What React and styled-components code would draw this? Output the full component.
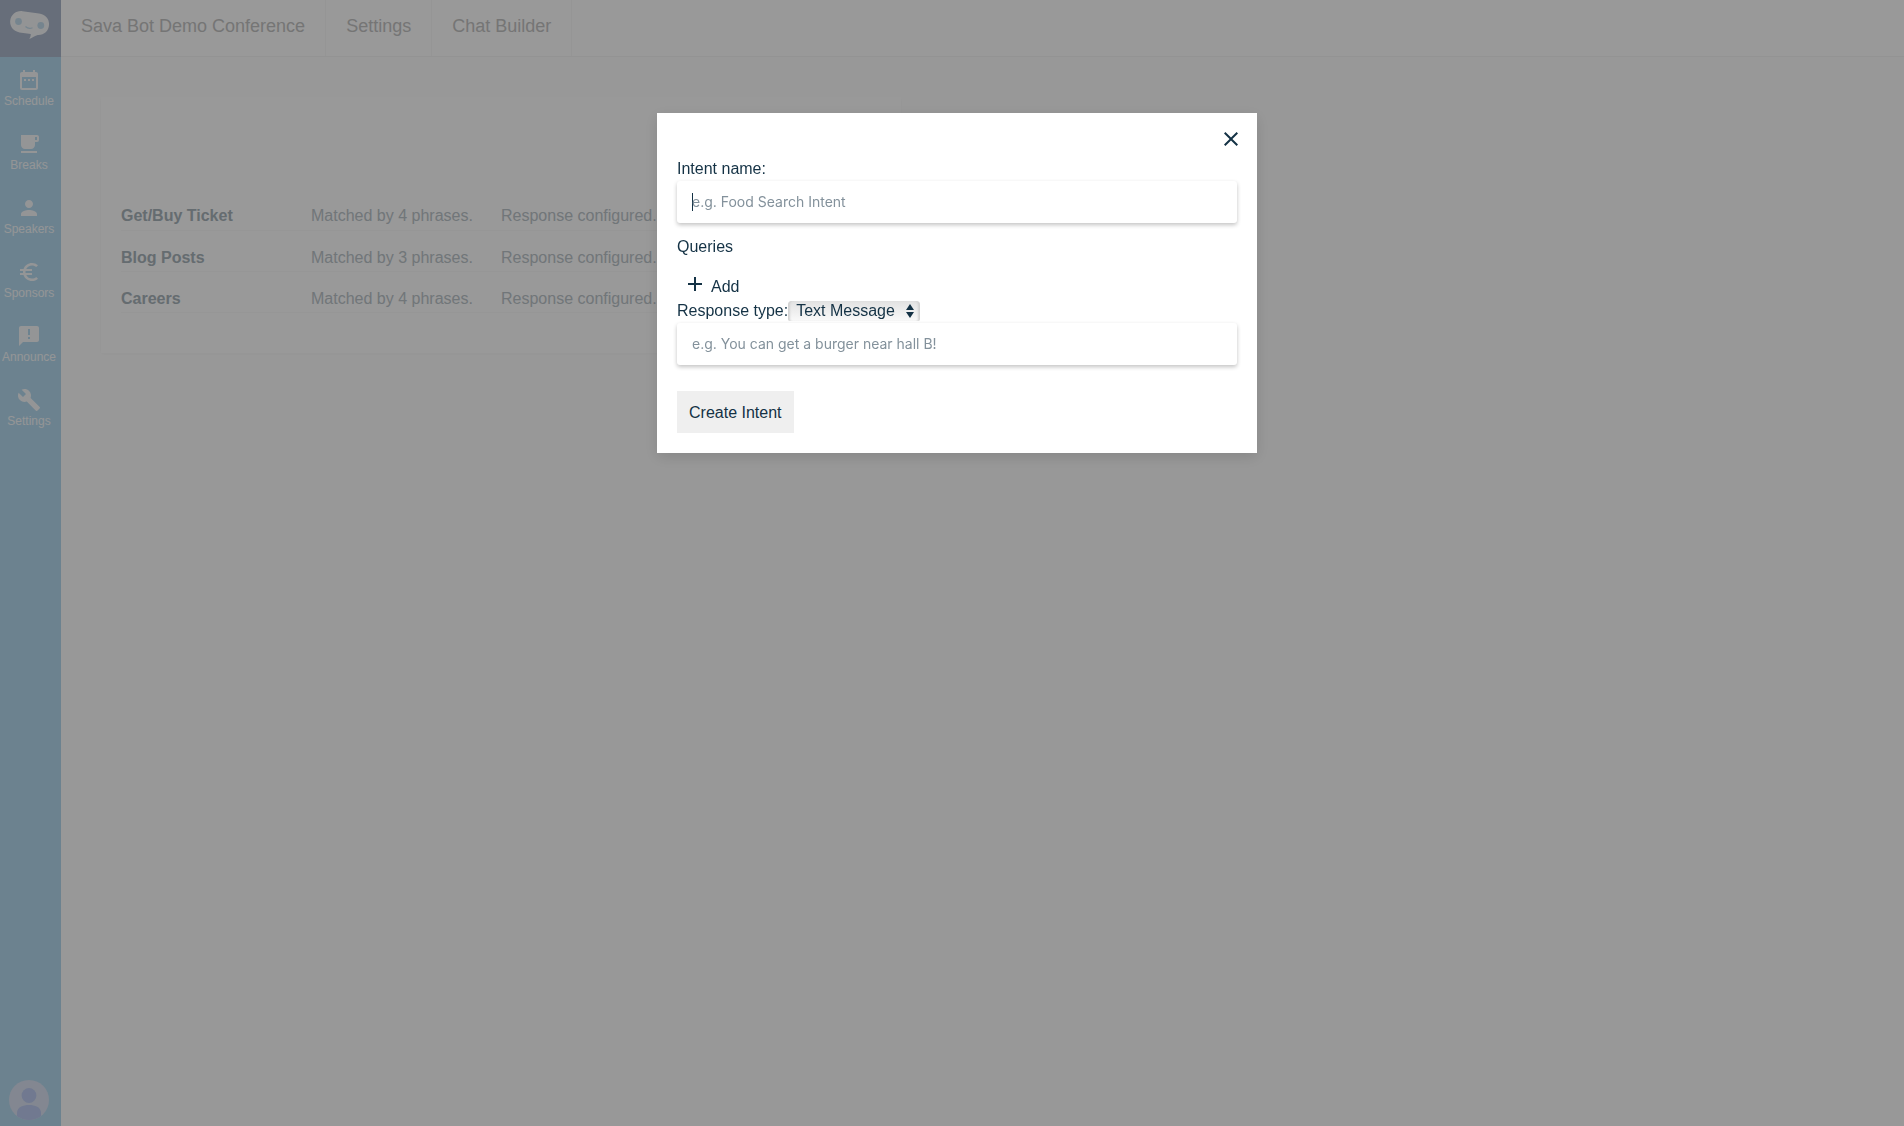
import React from "react";
import styled, { createGlobalStyle, css } from "styled-components";
import {
  MdDateRange,
  MdFreeBreakfast,
  MdPerson,
  MdEuroSymbol,
  MdAnnouncement,
  MdBuild,
  MdAdd,
  MdClose,
} from "react-icons/md";

const GlobalStyle = createGlobalStyle`
  *, *::before, *::after { box-sizing: border-box; }
  body {
    margin: 0;
    background: #fefefe;
    color: #143245;
    font-family: "Liberation Sans", Arial, sans-serif;
    font-size: 16px;
    line-height: 20px;
  }
  button, input, select { color: inherit; }
`;

const Page = styled.div`
  display: flex;
  min-height: 100vh;
`;

const Sidebar = styled.nav`
  display: flex;
  flex-direction: column;
  flex: none;
  width: 61px;
  background: #b5d9ef;
`;

const Logo = styled.a`
  display: block;
  height: 57px;
  padding: 10px;
  background: #acb7cb;

  svg { display: block; }
`;

const NavItem = styled.a`
  display: flex;
  flex-direction: column;
  align-items: center;
  gap: 2px;
  width: 58px;
  height: 64px;
  padding-top: 11px;
  color: #f7f9fb;
  font-size: 12px;
  line-height: 14px;
  text-decoration: none;
`;

const Avatar = styled.button`
  width: 40px;
  height: 40px;
  margin: auto 0 6px 9px;
  padding: 0;
  border: 0;
  border-radius: 50%;
  overflow: hidden;
  background: #dae2f2;

  svg { display: block; }
`;

const Main = styled.main`
  flex: 1;
  min-width: 0;
`;

const TopBar = styled.header`
  display: flex;
  height: 57px;
  border-bottom: 1px solid #f5f5f5;
  background: #fff;
`;

const Crumb = styled.a`
  padding: 16px 20px;
  border-right: 1px solid #f8f8f8;
  color: #c4c4c4;
  font-size: 18px;
  text-decoration: none;
`;

const Card = styled.section`
  max-width: 800px;
  margin: 40px;
  padding: 92px 20px 40px;
  background: #fff;
  box-shadow: 0 1px 4px rgba(0, 0, 0, 0.03);
`;

const IntentTable = styled.table`
  width: 100%;
  table-layout: fixed;
  border-collapse: collapse;
  color: #bcc5ca;
  text-align: left;

  th { color: #a9b4bb; }
  th, td {
    height: 41px;
    padding: 14px 0 0;
    border-bottom: 1px solid #fafafa;
  }
`;

const Overlay = styled.div`
  position: fixed;
  inset: 0;
  display: flex;
  justify-content: center;
  align-items: flex-start;
  padding: 113px 0 0 10px;
  background: rgba(0, 0, 0, 0.4);
`;

const Dialog = styled.form`
  display: flex;
  flex-direction: column;
  align-items: flex-start;
  width: 600px;
  max-width: 100%;
  padding: 14px 20px 20px;
  background: #fff;
  box-shadow: 0 4px 14px rgba(0, 0, 0, 0.12);
`;

const IconButton = styled.button`
  display: flex;
  align-items: center;
  padding: 0;
  border: 0;
  background: none;
  font: inherit;
`;

const CloseButton = styled(IconButton)`
  align-self: flex-end;
  margin: 0 -6px 8px 0;
`;

const AddButton = styled(IconButton)`
  gap: 4px;
  margin: 14px 0 4px 6px;

  span { padding-top: 6px; }
`;

const FieldLabel = styled.label`
  line-height: 20px;
`;

/* The focused field draws its own steady caret. */
const caret = css`
  background: linear-gradient(#143245, #143245) 15px 12px / 1px 18px no-repeat #fff;
  caret-color: transparent;
`;

const TextField = styled.input`
  width: 100%;
  height: 42px;
  margin: ${(p) => p.$gap || "2px 0 14px"};
  padding: 0 15px 2px;
  border: 0;
  border-radius: 3px;
  outline: 0;
  background: #fff;
  box-shadow: 0 2px 4px rgba(0, 0, 0, 0.24);
  font-family: Inter, sans-serif;
  font-size: 14px;

  &:focus { ${caret} }
  &::placeholder { color: #83919b; opacity: 1; }
`;

const ResponseRow = styled.div`
  display: flex;
  align-items: center;
  height: 20px;
`;

const SelectBox = styled.span`
  position: relative;
  display: flex;

  svg {
    position: absolute;
    top: 3px;
    right: 6px;
    pointer-events: none;
  }
`;

const Select = styled.select`
  appearance: none;
  width: 132px;
  height: 20px;
  padding: 0 8px;
  border: 0;
  border-radius: 4px 4px 2px 2px;
  background: linear-gradient(#e2e2e2, #fafafa);
  box-shadow: inset 3px 0 2px -1px #d2d2d2, inset -3px 0 2px -1px #d2d2d2;
  font-family: inherit;
  font-size: 16px;
  line-height: 20px;
`;

const SubmitButton = styled.button`
  height: 42px;
  margin-top: 26px;
  padding: 2px 12px 0;
  border: 0;
  background: #efefef;
  font-family: inherit;
  font-size: 16px;
`;

const navItems = [
  ["Schedule", MdDateRange],
  ["Breaks", MdFreeBreakfast],
  ["Speakers", MdPerson],
  ["Sponsors", MdEuroSymbol],
  ["Announce", MdAnnouncement],
  ["Settings", MdBuild],
];

const intents = [
  ["Get/Buy Ticket", 4],
  ["Blog Posts", 3],
  ["Careers", 4],
];

function BotLogo() {
  return (
    <svg width="40" height="30" viewBox="0 0 40 30" aria-hidden="true">
      <path
        d="M12.5 1.2 L29 3.5 C35.5 4.2 39.5 9 39 15 C38.6 21 34 25.3 27.8 25 C25 25.8 22.5 27.6 19.3 29 C20.3 27 20.8 25.5 20.7 24 L9.5 22.4 C3.5 21.5 -.3 16.5 .2 10.8 C.8 4.8 6.2.4 12.5 1.2Z"
        fill="#f5f7f9"
      />
      <circle cx="8.5" cy="11.5" r="3.4" fill="#c3dded" />
      <circle cx="30.8" cy="15.5" r="3.4" fill="#c3dded" />
      <path d="M15.5 16.5 Q18.5 19.5 22.5 17.7" fill="none" stroke="#c3dded" strokeWidth="1.2" />
    </svg>
  );
}

export default function App() {
  return (
    <>
      <GlobalStyle />
      <Page>
        <Sidebar>
          <Logo href="#" aria-label="Home">
            <BotLogo />
          </Logo>
          {navItems.map(([label, Icon]) => (
            <NavItem href="#" key={label}>
              <Icon size={24} />
              {label}
            </NavItem>
          ))}
          <Avatar type="button" aria-label="Account">
            <svg width="40" height="40" viewBox="0 0 40 40">
              <circle cx="20" cy="15.5" r="7.4" fill="#bccaf0" />
              <path d="M8 40 V33 C8 27 14 25 20 25 S32 27 32 33 V40Z" fill="#bccaf0" />
            </svg>
          </Avatar>
        </Sidebar>
        <Main>
          <TopBar>
            <Crumb href="#">Sava Bot Demo Conference</Crumb>
            <Crumb href="#">Settings</Crumb>
            <Crumb href="#">Chat Builder</Crumb>
          </TopBar>
          <Card>
            <IntentTable>
              <tbody>
                {intents.map(([name, count]) => (
                  <tr key={name}>
                    <th scope="row">{name}</th>
                    <td>Matched by {count} phrases.</td>
                    <td>Response configured.</td>
                    <td />
                  </tr>
                ))}
              </tbody>
            </IntentTable>
          </Card>
        </Main>
      </Page>
      <Overlay>
        <Dialog role="dialog" aria-label="Create intent">
          <CloseButton type="button" aria-label="Close">
            <MdClose size={24} />
          </CloseButton>
          <FieldLabel htmlFor="intent-name">Intent name:</FieldLabel>
          <TextField id="intent-name" placeholder="e.g. Food Search Intent" autoFocus />
          <span>Queries</span>
          <AddButton type="button">
            <MdAdd size={24} />
            <span>Add</span>
          </AddButton>
          <ResponseRow>
            <FieldLabel htmlFor="response-type">Response type:</FieldLabel>
            <SelectBox>
              <Select id="response-type">
                <option>Text Message</option>
              </Select>
              <svg width="8" height="14" viewBox="0 0 8 14" aria-hidden="true">
                <path d="M4 0 L8 6 H0Z M0 8 H8 L4 14Z" fill="#143245" />
              </svg>
            </SelectBox>
          </ResponseRow>
          <TextField
            aria-label="Response"
            placeholder="e.g. You can get a burger near hall B!"
            $gap="2px 0 0"
          />
          <SubmitButton type="submit">Create Intent</SubmitButton>
        </Dialog>
      </Overlay>
    </>
  );
}
